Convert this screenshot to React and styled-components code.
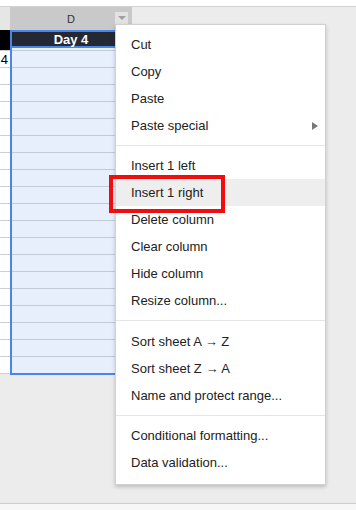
import React from "react";
import styled, { createGlobalStyle } from "styled-components";

const GlobalStyle = createGlobalStyle`
  html, body {
    margin: 0;
    padding: 0;
    background: #ececec;
  }
  body {
    font-family: "Liberation Sans", Arial, sans-serif;
  }
`;

const Page = styled.div`
  position: relative;
  width: 356px;
  height: 510px;
  display: flex;
  flex-direction: column;
  background: #ececec;
  overflow: hidden;
`;

const TopStrip = styled.div`
  height: 6px;
  background: #fff;
  border-bottom: 1px solid #d2d2d2;
`;

const Sheet = styled.div`
  width: 132px;
  display: flex;
  flex-direction: column;
`;

const HeaderRow = styled.div`
  display: flex;
  height: 23px;
`;

const StubHead = styled.div`
  width: 10px;
  background: #e6e6e6;
`;

const ColHead = styled.div`
  position: relative;
  flex: 1;
  display: flex;
  align-items: center;
  justify-content: center;
  background: #c9c9c9;
  color: #333;
  font-size: 11px;
`;

const HeadMenuButton = styled.div`
  position: absolute;
  right: 4px;
  top: 5px;
  width: 13px;
  height: 12px;
  background: #e2e2e2;
  display: flex;
  align-items: center;
  justify-content: center;

  &::after {
    content: "";
    border-left: 4px solid transparent;
    border-right: 4px solid transparent;
    border-top: 4px solid #a0a0a0;
  }
`;

const Body = styled.div`
  display: flex;
`;

const StubCol = styled.div`
  width: 10px;
  display: flex;
  flex-direction: column;
`;

const StubCell = styled.div`
  box-sizing: border-box;
  height: ${(p) => (p.$first ? 21 : 17)}px;
  background: ${(p) => (p.$first ? "#000" : "#fff")};
  border-bottom: 1px solid #cfcfcf;
  font-size: 13px;
  color: #000;
  display: flex;
  align-items: center;
  justify-content: flex-end;
  padding-right: 2px;
  overflow: hidden;
`;

const Selection = styled.div`
  flex: 1;
  display: flex;
  flex-direction: column;
  border-left: 2px solid #4a86e8;
  border-bottom: 2px solid #4a86e8;
`;

const TitleRow = styled.div`
  box-sizing: border-box;
  height: 21px;
  background: #e8effc;
  border-bottom: 1px solid #c3cad7;
  padding-bottom: 2px;
  display: flex;
`;

const TitleCell = styled.div`
  flex: 1;
  box-sizing: border-box;
  background: #232834;
  border: 2px solid #4a86e8;
  border-left: none;
  color: #fff;
  font-weight: bold;
  font-size: 13px;
  display: flex;
  align-items: center;
  justify-content: center;
`;

const DataCell = styled.div`
  box-sizing: border-box;
  height: 17px;
  background: #e8effc;
  border-bottom: 1px solid #c3cad7;

  &:last-child {
    height: 16px;
    border-bottom: none;
  }
`;

const Spacer = styled.div`
  flex: 1;
`;

const Footer = styled.div`
  height: 6px;
  background: #f7f7f7;
  border-top: 1px solid #cdcdcd;
`;

const Menu = styled.div`
  position: absolute;
  left: 115px;
  top: 24px;
  width: 211px;
  box-sizing: border-box;
  background: #fff;
  border: 1px solid rgba(0, 0, 0, 0.18);
  box-shadow: 0 2px 4px rgba(0, 0, 0, 0.2);
  padding: 6px 0 8px;
`;

const Item = styled.div`
  height: 27px;
  display: flex;
  align-items: center;
  justify-content: space-between;
  padding: 0 7px 0 15px;
  font-size: 13px;
  color: #222;
  background: ${(p) => (p.$hover ? "#eeeeee" : "transparent")};
`;

const SubArrow = styled.span`
  width: 0;
  height: 0;
  border-top: 4px solid transparent;
  border-bottom: 4px solid transparent;
  border-left: 6px solid #777;
`;

const Separator = styled.div`
  margin: 6px 0 ${(p) => (p.$wide ? 7 : 6)}px;
  border-top: 1px solid #e5e5e5;
`;

const Callout = styled.div`
  position: absolute;
  left: 109px;
  top: 175px;
  width: 116px;
  height: 38px;
  box-sizing: border-box;
  border: 4px solid #f10d0d;
`;

const menuGroups = [
  ["Cut", "Copy", "Paste", "Paste special"],
  ["Insert 1 left", "Insert 1 right", "Delete column", "Clear column", "Hide column", "Resize column..."],
  ["Sort sheet A \u2192 Z", "Sort sheet Z \u2192 A", "Name and protect range..."],
  ["Conditional formatting...", "Data validation..."],
];

const ROWS = 19;

export default function App() {
  return (
    <Page>
      <GlobalStyle />
      <TopStrip />
      <Sheet>
        <HeaderRow>
          <StubHead />
          <ColHead>
            D
            <HeadMenuButton />
          </ColHead>
        </HeaderRow>
        <Body>
          <StubCol>
            <StubCell $first />
            {Array.from({ length: ROWS }, (_, i) => (
              <StubCell key={i}>{i === 0 ? "4" : ""}</StubCell>
            ))}
          </StubCol>
          <Selection>
            <TitleRow>
              <TitleCell>Day 4</TitleCell>
            </TitleRow>
            {Array.from({ length: ROWS }, (_, i) => (
              <DataCell key={i} />
            ))}
          </Selection>
        </Body>
      </Sheet>
      <Spacer />
      <Footer />

      <Menu>
        {menuGroups.map((group, gi) => (
          <React.Fragment key={gi}>
            {gi > 0 && <Separator $wide={gi === 2} />}
            {group.map((label) => (
              <Item key={label} $hover={label === "Insert 1 right"}>
                {label}
                {label === "Paste special" && <SubArrow />}
              </Item>
            ))}
          </React.Fragment>
        ))}
      </Menu>
      <Callout />
    </Page>
  );
}
